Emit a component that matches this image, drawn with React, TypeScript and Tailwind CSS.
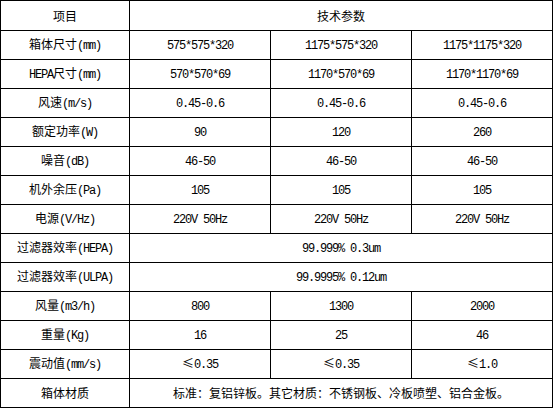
const rows: string[][] = [
  ['箱体尺寸(mm)', '575*575*320', '1175*575*320', '1175*1175*320'],
  ['HEPA尺寸(mm)', '570*570*69', '1170*570*69', '1170*1170*69'],
  ['风速(m/s)', '0.45-0.6', '0.45-0.6', '0.45-0.6'],
  ['额定功率(W)', '90', '120', '260'],
  ['噪音(dB)', '46-50', '46-50', '46-50'],
  ['机外余压(Pa)', '105', '105', '105'],
  ['电源(V/Hz)', '220V 50Hz', '220V 50Hz', '220V 50Hz'],
  ['过滤器效率(HEPA)', '99.999% 0.3um'],
  ['过滤器效率(ULPA)', '99.9995% 0.12um'],
  ['风量(m3/h)', '800', '1300', '2000'],
  ['重量(Kg)', '16', '25', '46'],
  ['震动值(mm/s)', '≤0.35', '≤0.35', '≤1.0'],
]

// ascii runs get a narrow mono face, like the half-width glyphs of the original
function Txt({ s }: { s: string }) {
  const parts = s.split(/([\x20-\x7E]+)/).filter(Boolean)
  return (
    <span className="whitespace-pre">
      {parts.map((p, i) =>
        /^[\x20-\x7E]+$/.test(p) ? (
          <span key={i} className="font-['Liberation_Mono',monospace] text-[12px] tracking-[-1.2px]">
            {p}
          </span>
        ) : (
          <span key={i}>{p}</span>
        )
      )}
    </span>
  )
}

function Cell({ s, span }: { s: string; span?: boolean }) {
  return (
    <div className={`flex items-center justify-center bg-white ${span ? 'col-span-3' : ''}`}>
      <Txt s={s} />
    </div>
  )
}

export default function App() {
  return (
    <div className="bg-white w-[554px] h-[409px] font-['Noto_Sans_CJK_SC',sans-serif] text-[12px] text-black leading-none">
      <div className="grid w-[553px] grid-cols-[128px_140px_140px_140px] grid-rows-[29px_repeat(13,28px)] gap-px bg-black p-px">
        <Cell s="项目" />
        <Cell s="技术参数" span />
        {rows.map((r) =>
          r.length === 2 ? (
            <>
              <Cell key={r[0]} s={r[0]} />
              <Cell key={r[0] + 'v'} s={r[1]} span />
            </>
          ) : (
            r.map((c, i) => <Cell key={r[0] + i} s={c} />)
          )
        )}
        <Cell s="箱体材质" />
        <Cell s="标准：复铝锌板。其它材质：不锈钢板、冷板喷塑、铝合金板。" span />
      </div>
    </div>
  )
}
